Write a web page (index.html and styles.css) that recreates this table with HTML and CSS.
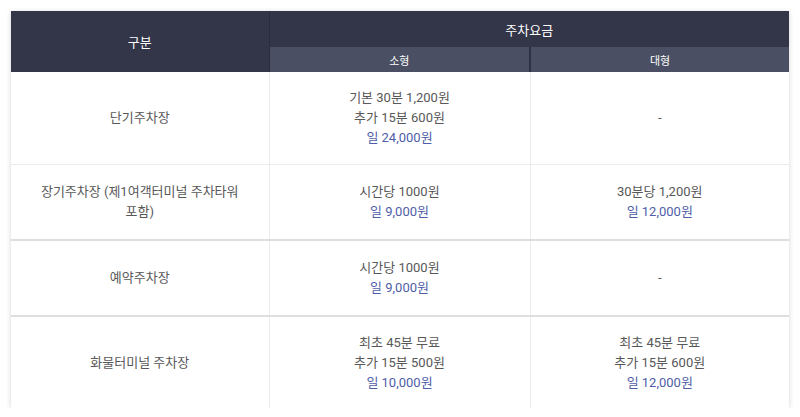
FILE: index.html
```html
<!DOCTYPE html>
<html lang="ko">
<head>
<meta charset="utf-8">
<link rel="stylesheet" href="styles.css">
</head>
<body>
<div class="wrap">
<table class="fee">
  <colgroup><col class="c1"><col class="c2"><col class="c3"></colgroup>
  <thead>
    <tr class="h1">
      <th rowspan="2" class="gubun">구분</th>
      <th colspan="2">주차요금</th>
    </tr>
    <tr class="h2">
      <th class="small">소형</th>
      <th>대형</th>
    </tr>
  </thead>
  <tbody>
    <tr class="r1">
      <td>단기주차장</td>
      <td>기본 30분 1,200원<br>추가 15분 600원<br><span class="day">일 24,000원</span></td>
      <td>-</td>
    </tr>
    <tr class="r2">
      <td>장기주차장 (제1여객터미널 주차타워 포함)</td>
      <td>시간당 1000원<br><span class="day">일 9,000원</span></td>
      <td>30분당 1,200원<br><span class="day">일 12,000원</span></td>
    </tr>
    <tr class="r3">
      <td>예약주차장</td>
      <td>시간당 1000원<br><span class="day">일 9,000원</span></td>
      <td>-</td>
    </tr>
    <tr class="r4">
      <td>화물터미널 주차장</td>
      <td>최초 45분 무료<br>추가 15분 500원<br><span class="day">일 10,000원</span></td>
      <td>최초 45분 무료<br>추가 15분 600원<br><span class="day">일 12,000원</span></td>
    </tr>
  </tbody>
</table>
</div>
</body>
</html>
```

FILE: styles.css
```css
html, body {
  margin: 0;
  padding: 0;
  background: #ffffff;
}
.wrap {
  padding: 11px 11px 0 11px;
}
.fee {
  width: 778px;
  border-collapse: collapse;
  table-layout: fixed;
  font-family: Roboto, "Noto Sans CJK KR", sans-serif;
  box-shadow: 0 1px 5px rgba(0, 0, 0, 0.18);
  word-break: keep-all;
}
.c1 { width: 258px; }
.c2 { width: 261px; }
.c3 { width: 259px; }
.fee th {
  color: #ffffff;
  font-weight: 400;
  padding: 0;
  text-align: center;
}
.h1 th {
  background: #333548;
  height: 36px;
  font-size: 13px;
}
.h1 th.gubun {
  border-right: 1px solid #2b2d3f;
}
.h2 th {
  background: #4a4f63;
  height: 25px;
  font-size: 11px;
}
.h2 th.small {
  border-right: 2px solid #2e3043;
}
.fee td {
  text-align: center;
  vertical-align: middle;
  font-size: 13px;
  line-height: 20px;
  color: #585858;
  padding: 0 20px;
  border-right: 1px solid #ececec;
  border-bottom: 1px solid #ececec;
}
.fee td:last-child { border-right: none; }
.r1 td { height: 92px; }
.r2 td { height: 74px; border-bottom: 2px solid #dedede; }
.r3 td { height: 74px; border-bottom: 2px solid #dedede; }
.r4 td { height: 91px; border-bottom: none; }
.day {
  color: #4f5ea8;
}
```
